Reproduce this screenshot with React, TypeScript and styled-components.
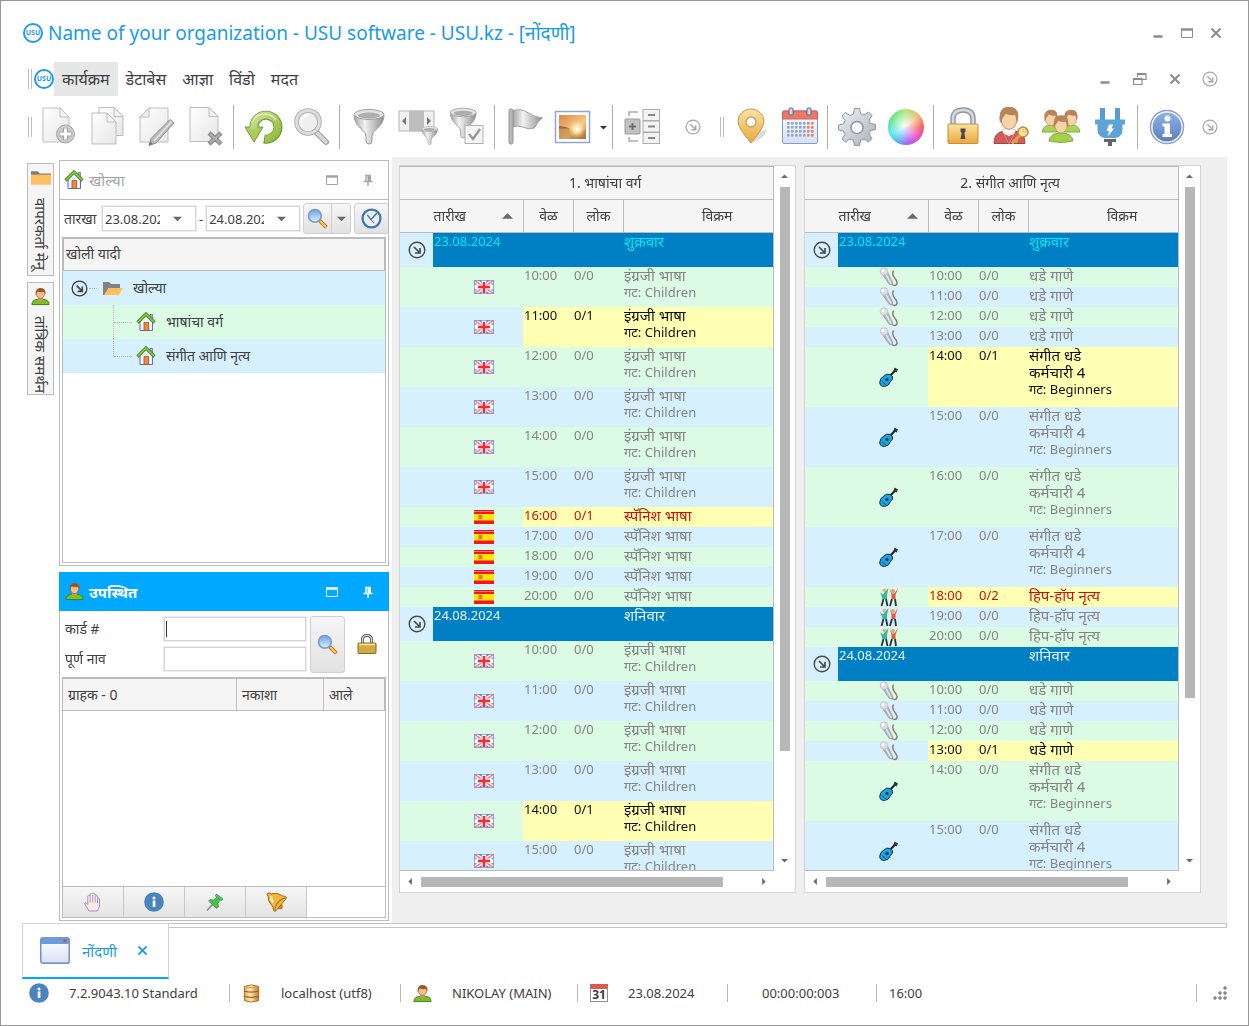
import React from "react";
import styled, { createGlobalStyle, css } from "styled-components";

const UI_FONT = '"Noto Sans", "Open Sans", "Noto Sans Devanagari", sans-serif';

const color = {
  accent: "#00a8ff",
  title: "#1a9be8",
  line: "#bcbcbc",
  lineSoft: "#d4d4d4",
  head: "#f5f5f5",
  text: "#404040",
  blueRow: "#d7f0fe",
  greenRow: "#dcfbe4",
  hot: "#ffffb4",
  day: "#0080c4",
  thumb: "#b7b7b7",
};

const GlobalStyle = createGlobalStyle`
  *, *::before, *::after { box-sizing: border-box; }
  body {
    margin: 0;
    font-family: ${UI_FONT};
    font-size: 13px;
    line-height: 16px;
    color: ${color.text};
    background: #fff;
  }
  button, input { font: inherit; color: inherit; }
  button { padding: 0; border: 0; background: none; cursor: pointer; }
  svg { display: block; flex: none; }
`;

/* ---------- shell ---------- */

const Window = styled.div`
  display: flex;
  flex-direction: column;
  height: 100vh;
  border: 1px solid #979797;
  padding: 0 21px;
  overflow: hidden;
`;

const TitleBar = styled.header`
  display: flex;
  align-items: center;
  gap: 5px;
  height: 64px;
  flex: none;
  padding: 0 5px 0 1px;
`;

const Title = styled.h1`
  flex: 1;
  margin: 0;
  font-size: 19px;
  line-height: 24px;
  font-weight: 400;
  color: ${color.title};
  white-space: nowrap;
`;

const WindowButtons = styled.div<{ $gap: number; $end?: number }>`
  display: flex;
  align-items: center;
  gap: ${(p) => p.$gap}px;
  margin-right: ${(p) => p.$end ?? 0}px;
  color: #8c8c8c;
`;

const MenuBar = styled.nav`
  display: flex;
  align-items: center;
  height: 34px;
  flex: none;
  margin-top: -3px;
  padding-left: 6px;
`;

const Grip = styled.span`
  width: 4px;
  height: 20px;
  margin-right: 2px;
  flex: none;
  border: solid #bdbdbd;
  border-width: 0 1px;
`;

const MenuItem = styled.button<{ $active?: boolean }>`
  height: 34px;
  padding: 0 8px;
  font-size: 16px;
  line-height: 20px;
  background: ${(p) => (p.$active ? "#e6e8e8" : "transparent")};
`;

const Spacer = styled.span`
  flex: 1;
`;

const ToolBar = styled.div`
  display: flex;
  align-items: center;
  height: 61px;
  flex: none;
  padding: 1px 0 0 6px;
`;

const ToolButton = styled.button`
  display: flex;
  align-items: center;
  justify-content: center;
  width: 49px;
  height: 48px;
  flex: none;
`;

const DropArrowButton = styled.button`
  display: grid;
  place-items: center;
  width: 12px;
  height: 40px;
`;

const MoreButton = styled.button<{ $wide?: boolean }>`
  display: grid;
  place-items: center;
  width: ${(p) => (p.$wide ? 54 : 34)}px;
  height: 40px;
  color: #a9a9a9;
`;

const ToolSeparator = styled.span`
  width: 1px;
  height: 44px;
  margin: 0 4px 0 3px;
  flex: none;
  background: #b0b0b0;
`;

const Workspace = styled.main`
  display: grid;
  grid-template-columns: 31px 330px minmax(0, 1fr);
  column-gap: 3px;
  flex: 1;
  min-height: 0;
  padding-left: 3px;
`;

/* ---------- side tabs ---------- */

const SideTabs = styled.div`
  display: flex;
  flex-direction: column;
  align-items: center;
  gap: 6px;
  padding-top: 6px;
`;

const SideTab = styled.button`
  display: flex;
  flex-direction: column;
  align-items: center;
  gap: 10px;
  width: 27px;
  height: 113px;
  padding-top: 4px;
  border: 1px solid ${color.line};
  background: ${color.head};
  white-space: nowrap;
  overflow: hidden;
`;

const VerticalText = styled.span`
  writing-mode: vertical-rl;
  font-size: 15px;
  line-height: 20px;
`;

/* ---------- dock panels ---------- */

const Dock = styled.div`
  display: flex;
  flex-direction: column;
  gap: 6px;
  padding: 3px 0 2px;
  min-height: 0;
`;

const Panel = styled.section<{ $grow: number }>`
  display: flex;
  flex-direction: column;
  flex: ${(p) => p.$grow} 1 0;
  min-height: 0;
  border: 1px solid ${color.line};
  background: #fff;
`;

const PanelHeader = styled.header<{ $active?: boolean }>`
  display: flex;
  align-items: center;
  gap: 5px;
  height: 39px;
  flex: none;
  padding: 0 12px 0 4px;
  color: #a4a4a4;
  border-bottom: 1px solid ${color.line};
  ${(p) =>
    p.$active &&
    css`
      margin: -1px -1px 0;
      padding: 0 13px 0 6px;
      color: #fff;
      background: ${color.accent};
      border-bottom: 0;
    `}
`;

const PanelTitle = styled.h2<{ $strong?: boolean }>`
  flex: 1;
  margin: 0;
  font-size: 15px;
  line-height: 20px;
  font-weight: ${(p) => (p.$strong ? 700 : 400)};
`;

const PanelAction = styled.button`
  display: grid;
  place-items: center;
  width: 16px;
  height: 20px;
  margin-left: 15px;
`;

const FilterRow = styled.div`
  display: flex;
  align-items: center;
  gap: 3px;
  height: 37px;
  flex: none;
  padding-left: 4px;
  overflow: hidden;
  white-space: nowrap;
  & > * {
    flex: none;
  }
`;

const FilterLabel = styled.label`
  width: 35px;
  font-size: 14px;
  line-height: 20px;
`;

const DateBox = styled.span`
  display: flex;
  align-items: center;
  width: 94px;
  height: 25px;
  border: 1px solid ${color.lineSoft};
  outline: 1px solid #eee;
`;

const DateInput = styled.input`
  width: 57px;
  height: 20px;
  padding: 0 0 0 2px;
  border: 0;
  outline: 0;
  background: transparent;
`;

const DateDrop = styled.button`
  display: grid;
  place-items: center;
  flex: 1;
  height: 23px;
`;

const raised = css`
  border: 1px solid #cfcfcf;
  border-radius: 3px;
  background: linear-gradient(#f6f6f6, #e2e2e2);
`;

const SplitButton = styled.span`
  ${raised}
  display: flex;
  height: 31px;
`;

const SplitPart = styled.button<{ $width: number }>`
  display: grid;
  place-items: center;
  width: ${(p) => p.$width}px;
  & + & {
    border-left: 1px solid #cfcfcf;
  }
`;

const RaisedButton = styled.button<{ $tall?: boolean }>`
  ${raised}
  display: grid;
  place-items: center;
  width: 35px;
  height: ${(p) => (p.$tall ? 57 : 31)}px;
  flex: none;
`;

const Inset = styled.div`
  display: flex;
  flex-direction: column;
  flex: 1;
  min-height: 0;
  margin: 0 2px 2px;
  border: 1px solid ${color.line};
`;

const TreeHead = styled.div`
  height: 33px;
  flex: none;
  padding: 5px 2px;
  font-size: 14px;
  line-height: 20px;
  background: ${color.head};
  border: 1px solid ${color.line};
`;

const Tree = styled.ul`
  list-style: none;
  margin: 0;
  padding: 0;
`;

const TreeRow = styled.li<{ $tone: "blue" | "green" }>`
  display: flex;
  align-items: center;
  height: 34px;
  font-size: 14px;
  line-height: 20px;
  background: ${(p) => (p.$tone === "blue" ? color.blueRow : color.greenRow)};
`;

const TreeToggle = styled.button`
  display: grid;
  place-items: center;
  width: 20px;
  height: 20px;
  margin-left: 6px;
`;

const TreeDash = styled.span`
  width: 8px;
  margin-right: 6px;
  border-top: 1px dotted #b4b4b4;
`;

const TreeBranch = styled.span<{ $last?: boolean }>`
  align-self: ${(p) => (p.$last ? "flex-start" : "stretch")};
  width: 1px;
  height: ${(p) => (p.$last ? "17px" : "auto")};
  margin-left: 50px;
  border-left: 1px dotted #b4b4b4;
`;

const TreeTwig = styled.span`
  width: 18px;
  margin-right: 4px;
  border-top: 1px dotted #b4b4b4;
`;

const TreeLabel = styled.span`
  margin-left: 10px;
`;

/* ---------- attendance panel ---------- */

const LookupForm = styled.form`
  display: grid;
  grid-template-columns: 95px 142px 35px 1fr;
  grid-template-rows: 24px 24px;
  gap: 6px 4px;
  flex: none;
  padding: 6px 4px 6px 5px;
  align-items: center;
`;

const FieldLabel = styled.label`
  font-size: 14px;
  line-height: 20px;
`;

const TextField = styled.input<{ $caret?: boolean }>`
  width: 100%;
  height: 24px;
  padding: 0 2px;
  border: 1px solid ${color.lineSoft};
  outline: 1px solid #eee;
  ${(p) =>
    p.$caret &&
    css`
      caret-color: transparent;
      background: linear-gradient(#333, #333) no-repeat 1px center / 1px 16px;
    `}
`;

const SpanRows = styled.div`
  grid-row: 1 / span 2;
  grid-column: 3;
`;

const LockCell = styled.div`
  grid-row: 1 / span 2;
  grid-column: 4;
  display: grid;
  place-items: center;
`;

const ClientTable = styled.table`
  width: 100%;
  border-spacing: 0;
  table-layout: fixed;
`;

const ClientTh = styled.th`
  height: 33px;
  padding: 0 5px;
  text-align: left;
  font-size: 14px;
  line-height: 20px;
  font-weight: 400;
  background: ${color.head};
  border: solid ${color.line};
  border-width: 1px 1px 1px 0;
`;

const ActionStrip = styled.div`
  display: flex;
  height: 31px;
  flex: none;
  margin-top: auto;
  border-top: 1px solid ${color.line};
`;

const StripButton = styled.button`
  display: grid;
  place-items: center;
  width: 61px;
  background: linear-gradient(#f6f6f6, #e4e4e4);
  border-right: 1px solid #c8c8c8;
`;

/* ---------- schedule grids ---------- */

const Mdi = styled.div`
  display: grid;
  grid-template-columns: repeat(2, minmax(0, 1fr));
  gap: 8px;
  padding: 8px 26px 30px 7px;
  background: #efefef;
  min-height: 0;
`;

const GridFrame = styled.section`
  display: grid;
  grid-template-columns: minmax(0, 1fr) 21px;
  grid-template-rows: minmax(0, 1fr) 21px;
  min-height: 0;
  border: 1px solid ${color.lineSoft};
  background: #fff;
`;

const Viewport = styled.div`
  overflow: hidden;
  border: solid ${color.line};
  border-width: 1px 1px 1px 0;
`;

const Schedule = styled.table`
  width: 110%;
  border-spacing: 0;
  table-layout: fixed;
`;

const Th = styled.th`
  height: 33px;
  padding: 0;
  font-size: 14px;
  line-height: 20px;
  font-weight: 400;
  background: ${color.head};
  border-bottom: 1px solid ${color.line};
  & + & {
    border-left: 1px solid ${color.line};
  }
`;

const SortHead = styled.button`
  display: flex;
  align-items: center;
  justify-content: flex-end;
  gap: 36px;
  width: 100%;
  padding-right: 10px;
`;

type Tone = "blue" | "green";
type Mood = "idle" | "booked" | "now";

const Row = styled.tr<{ $tone: Tone; $lines: number }>`
  height: ${(p) => p.$lines * 20}px;
  background: ${(p) => (p.$tone === "blue" ? color.blueRow : color.greenRow)};
`;

const moodColor: Record<Mood, string> = { idle: "#858585", booked: "#111", now: "#c8140c" };

const Td = styled.td<{ $mood: Mood }>`
  padding: 0 0 0 1px;
  vertical-align: top;
  white-space: nowrap;
  color: ${(p) => moodColor[p.$mood]};
  background: ${(p) => (p.$mood === "idle" ? "transparent" : color.hot)};
`;

const Line = styled.span<{ $large?: boolean }>`
  display: block;
  font-size: ${(p) => (p.$large ? 15 : 13)}px;
  line-height: 17px;
`;

const IconTd = styled.td`
  padding: 0 0 0 45px;
  vertical-align: middle;
  svg {
    margin: 0 auto;
  }
`;

const DayRow = styled.tr<{ $today?: boolean }>`
  height: 34px;
  color: ${(p) => (p.$today ? "#00e6f5" : "#e8f6ff")};
`;

const DayTd = styled.td`
  padding: 0 0 0 1px;
  vertical-align: top;
  background: ${color.day};
`;

const ToggleTd = styled.td`
  padding: 0;
  color: #4a4a4a;
  background: ${color.blueRow};
`;

const ToggleButton = styled.button`
  display: block;
  margin: 0 auto;
`;

const Scroll = styled.div<{ $dir: "column" | "row" }>`
  display: flex;
  flex-direction: ${(p) => p.$dir};
  align-items: center;
`;

const ScrollButton = styled.button`
  display: grid;
  place-items: center;
  width: 21px;
  height: 21px;
  flex: none;
`;

const ScrollTrack = styled.div<{ $dir: "column" | "row" }>`
  display: flex;
  flex-direction: ${(p) => p.$dir};
  flex: 1;
  min-height: 0;
`;

const ScrollThumb = styled.div<{ $dir: "column" | "row"; $size: number }>`
  width: ${(p) => (p.$dir === "row" ? `${p.$size}%` : "10px")};
  height: ${(p) => (p.$dir === "row" ? "10px" : `${p.$size}%`)};
  background: ${color.thumb};
`;

/* ---------- document tabs and status ---------- */

const DocTabs = styled.div`
  display: flex;
  height: 56px;
  flex: none;
`;

const DocTab = styled.div`
  display: flex;
  align-items: center;
  gap: 12px;
  width: 147px;
  padding: 0 20px 0 17px;
  color: ${color.title};
  border: solid ${color.lineSoft};
  border-width: 1px 1px 0;
  border-bottom: 2px solid ${color.accent};
`;

const DocTabName = styled.button`
  flex: 1;
  text-align: left;
  font-size: 15px;
  line-height: 20px;
`;

const DocRail = styled.div`
  flex: 1;
  height: 5px;
  border: 1px solid #c4c4c4;
  border-left: 0;
`;

const StatusBar = styled.footer`
  display: flex;
  align-items: center;
  height: 28px;
  flex: none;
  margin-bottom: 18px;
`;

const StatusCell = styled.div<{ $width: number; $pad?: number; $open?: boolean }>`
  display: flex;
  align-items: center;
  gap: 20px;
  width: ${(p) => p.$width}px;
  height: 18px;
  padding-left: ${(p) => p.$pad ?? 12}px;
  border-right: ${(p) => (p.$open ? 0 : 1)}px solid #b8b8b8;
  white-space: nowrap;
`;

const StatusGrip = styled.div`
  display: flex;
  align-items: center;
  justify-content: flex-end;
  width: 31px;
  height: 18px;
  margin-left: auto;
  border-left: 1px solid #b8b8b8;
`;

/* ---------- drawings ---------- */

const HiddenDefs = styled.svg`
  position: absolute;
  width: 0;
  height: 0;
`;

const Defs = () => (
  <HiddenDefs aria-hidden="true">
    <defs>
      <linearGradient id="paper" x1="0" y1="0" x2="1" y2="1">
        <stop offset="0" stopColor="#fff" />
        <stop offset="1" stopColor="#e6e6e6" />
      </linearGradient>
      <linearGradient id="steel" x1="0" y1="0" x2="1" y2="0">
        <stop offset="0" stopColor="#a2a2a2" />
        <stop offset=".35" stopColor="#f2f2f2" />
        <stop offset="1" stopColor="#8e8e8e" />
      </linearGradient>
      <linearGradient id="green" x1="0" y1="0" x2="1" y2="1">
        <stop offset="0" stopColor="#cfe08f" />
        <stop offset="1" stopColor="#8fbb3d" />
      </linearGradient>
      <linearGradient id="gold" x1="0" y1="0" x2="0" y2="1">
        <stop offset="0" stopColor="#fbe3a4" />
        <stop offset="1" stopColor="#e9a83c" />
      </linearGradient>
      <linearGradient id="drum" x1="0" y1="0" x2="1" y2="0">
        <stop offset="0" stopColor="#e9a34a" />
        <stop offset=".4" stopColor="#fff0c4" />
        <stop offset="1" stopColor="#c47a28" />
      </linearGradient>
      <linearGradient id="sunset" x1="0" y1="0" x2="1" y2="1">
        <stop offset="0" stopColor="#d98a4c" />
        <stop offset=".6" stopColor="#f8c681" />
        <stop offset="1" stopColor="#b9743c" />
      </linearGradient>
      <radialGradient id="glow">
        <stop offset="0" stopColor="#fffdf0" />
        <stop offset=".3" stopColor="#fff0b8" />
        <stop offset="1" stopColor="#fbd28c" stopOpacity="0" />
      </radialGradient>
      <linearGradient id="gear" x1="0" y1="0" x2="1" y2="1">
        <stop offset="0" stopColor="#f0f2f5" />
        <stop offset="1" stopColor="#a9afbb" />
      </linearGradient>
      <linearGradient id="blueDisc" x1="0" y1="0" x2="0" y2="1">
        <stop offset="0" stopColor="#8fb2e2" />
        <stop offset="1" stopColor="#5b7fc2" />
      </linearGradient>
      <linearGradient id="lens" x1="0" y1="0" x2="0" y2="1">
        <stop offset="0" stopColor="#6aa3ec" />
        <stop offset="1" stopColor="#dff1ff" />
      </linearGradient>
      <linearGradient id="sheet" x1="0" y1="0" x2="0" y2="1">
        <stop offset="0" stopColor="#fff" />
        <stop offset="1" stopColor="#d7e1f4" />
      </linearGradient>
    </defs>
  </HiddenDefs>
);

const Icon = ({ size = 40, box = 40, children }: { size?: number; box?: number; children: React.ReactNode }) => (
  <svg width={size} height={size} viewBox={`0 0 ${box} ${box}`} fill="none" aria-hidden="true">
    {children}
  </svg>
);

const Logo = styled.span`
  display: grid;
  place-items: center;
  width: 20px;
  height: 20px;
  flex: none;
  border: 2px solid #1e9af0;
  border-radius: 50%;
  font-size: 7px;
  line-height: 8px;
  font-weight: 700;
  color: #1e9af0;
  background: #fff;
`;

const Page = ({ x, y, w, h }: { x: number; y: number; w: number; h: number }) => (
  <>
    <path
      d={`M${x} ${y}h${w - 9}l9 9v${h - 9}h-${w}z`}
      fill="url(#paper)"
      stroke="#bdbdbd"
      strokeLinejoin="round"
    />
    <path d={`M${x + w - 9} ${y}v9h9z`} fill="#f4f4f4" stroke="#bdbdbd" strokeLinejoin="round" />
  </>
);

const NewIcon = () => (
  <Icon>
    <Page x={4} y={1} w={26} h={34} />
    <circle cx="26.500" cy="27" r="9" fill="#cacaca" stroke="#a8a8a8" />
    <path d="M26.500 21v12M20.500 27h12" stroke="#a0a0a0" strokeWidth="5" />
    <path d="M26.500 21.500v11M21 27h11" stroke="#fff" strokeWidth="3" />
  </Icon>
);
const CopyIcon = () => (
  <Icon>
    <Page x={11} y={0.5} w={24} h={28} />
    <Page x={4} y={6} w={24} h={31} />
  </Icon>
);
const EditIcon = () => (
  <Icon>
    <path d="M12 1h19v34H3V10z" fill="url(#paper)" stroke="#bdbdbd" strokeLinejoin="round" />
    <path d="M12 1v9H3z" fill="#eee" stroke="#bdbdbd" strokeLinejoin="round" />
    <path d="M33 12.500l4 3.500-18 20-7 2.500 2-7z" fill="#bababa" stroke="#8c8c8c" strokeLinejoin="round" />
    <path d="M34.500 14.500 17 34" stroke="#e9e9e9" strokeWidth="1.500" />
    <path d="m13.500 34.500 2.500 2.500-4 1.500z" fill="#777" />
  </Icon>
);
const DeleteIcon = () => (
  <Icon>
    <Page x={4} y={0.5} w={28} h={34} />
    <path d="m23 26 12 11M35 26 23 37" stroke="#909090" strokeWidth="4.500" />
    <path d="m24 27 10 9M34 27l-10 9" stroke="#acacac" strokeWidth="2" />
  </Icon>
);
const RefreshIcon = () => (
  <Icon>
    <path d="M11 21A12 12 0 1 1 21 32" stroke="#6f9a34" strokeWidth="9" />
    <path d="M2 20h18l-9 15z" fill="#a9cc5a" stroke="#6f9a34" strokeLinejoin="round" />
    <path d="M11 22A12 12 0 1 1 22 31.900" stroke="url(#green)" strokeWidth="7" />
    <path d="M9 15A14 14 0 0 1 33 13" stroke="#e2efb8" strokeWidth="1.500" />
  </Icon>
);
const ToolSearchIcon = () => (
  <Icon>
    <path d="m24 25 10 10" stroke="#a0a0a0" strokeWidth="6" strokeLinecap="round" />
    <path d="m25 26 9 9" stroke="#d8d8d8" strokeWidth="3.500" strokeLinecap="round" />
    <circle cx="16" cy="15" r="11.500" fill="#efefef" stroke="#a8a8a8" strokeWidth="4.500" />
    <circle cx="16" cy="15" r="11.500" stroke="#dedede" strokeWidth="2.800" />
    <path d="M9 16a7 7 0 0 1 8-8" stroke="#fff" strokeWidth="2.500" />
  </Icon>
);
const FunnelShape = () => (
  <>
    <path d="M5 8q0 8 8 14.500 4 3 4 7V34q0 3 3 3t3-3v-4.500q0-4 4-7Q35 16 35 8z" fill="url(#steel)" stroke="#999" />
    <ellipse cx="20" cy="7.500" rx="15" ry="5" fill="#e2e2e2" stroke="#a2a2a2" />
    <ellipse cx="20" cy="8.500" rx="11" ry="3" fill="#adadad" />
  </>
);
const FunnelIcon = () => (
  <Icon>
    <FunnelShape />
  </Icon>
);
const ColumnFilterIcon = () => (
  <Icon>
    <rect x="1" y="4" width="35" height="20" fill="#f1f1f1" stroke="#b5b5b5" />
    <rect x="11" y="3.500" width="15" height="21" fill="#bdbdbd" />
    <path d="M8 10v8l-4-4zM29 10v8l4-4z" fill="#777" />
    <g transform="translate(21 18) scale(.53)">
      <FunnelShape />
    </g>
  </Icon>
);
const FilterCheckIcon = () => (
  <Icon>
    <g transform="translate(-1 -1) scale(.86)">
      <FunnelShape />
    </g>
    <rect x="18" y="18.500" width="18" height="18" fill="#f6f6f6" stroke="#b0b0b0" />
    <path d="m22 27 4 5 7-10" stroke="#9a9a9a" strokeWidth="2.500" />
  </Icon>
);
const FlagIcon = () => (
  <Icon>
    <path d="M8.500 4q8-3 14 1 7 5 16 6-5 3-8 10-6 2-12-1-5-2-10 0z" fill="url(#steel)" stroke="#a2a2a2" />
    <rect x="5" y="2" width="4" height="35" rx="1.500" fill="#b8b8b8" stroke="#949494" />
  </Icon>
);
const PictureIcon = () => (
  <Icon>
    <rect x="2.500" y="4.500" width="34" height="31" fill="#fff" stroke="#8fa6d4" strokeWidth="1.500" />
    <rect x="6" y="8" width="27" height="24" fill="url(#sunset)" />
    <path d="M6 20q8 0 14 3h13v9H6z" fill="#a2672f" opacity=".4" />
    <path d="M6 19q6 0 11 2.500H6z" fill="#5d4a3c" opacity=".6" />
    <circle cx="24" cy="22" r="9" fill="url(#glow)" />
  </Icon>
);
const GroupingIcon = () => (
  <Icon>
    <path d="M7 9V5h9M7 30v4h9" stroke="#aaa" strokeWidth="1.500" />
    <rect x="3" y="12" width="15" height="15" rx="1" fill="#c2c2c2" stroke="#999" />
    <path d="M10.500 16v7M7 19.500h7" stroke="#707070" strokeWidth="2" />
    {[2.5, 14, 25.5].map((y) => (
      <React.Fragment key={y}>
        <rect x="21" y={y} width="16.500" height="11" fill="#f3f3f3" stroke="#adadad" />
        <path d={`M26 ${y + 5.5}h7`} stroke="#888" strokeWidth="2" />
      </React.Fragment>
    ))}
  </Icon>
);
const PinMapIcon = () => (
  <Icon>
    <path d="M21 36q4-13 15-13-2 8-12 11z" fill="#999" opacity=".35" />
    <path d="M20 36Q7 21 7 14.500a13 12.500 0 0 1 26 0Q33 21 20 36z" fill="url(#gold)" stroke="#c99a4e" />
    <circle cx="20" cy="15" r="5" fill="#fff" stroke="#c9a468" strokeWidth="1.500" />
  </Icon>
);
const CalendarIcon = () => (
  <Icon>
    <rect x="2.500" y="4" width="35" height="32.500" rx="1.500" fill="url(#sheet)" stroke="#7f9bd0" />
    <path d="M2.500 5.500q0-1.500 1.500-1.500h32q1.500 0 1.500 1.500V12h-35z" fill="#e8786a" stroke="#d2604f" />
    <rect x="9" y="1" width="4" height="7" rx="1" fill="#cfd5e0" stroke="#5b6a88" />
    <rect x="27" y="1" width="4" height="7" rx="1" fill="#cfd5e0" stroke="#5b6a88" />
    {[15, 19, 23, 27].map((y) =>
      [7, 11, 15, 19, 23, 27, 31].map((x) => (
        <rect key={`${x}-${y}`} x={x} y={y} width="2.600" height="2.600" fill={x > 26 ? "#e08274" : "#8fa5d2"} />
      ))
    )}
  </Icon>
);
const GearIcon = () => (
  <Icon>
    <path
      d="M17.500 1.500h5l1 5 3.500 1.500 4.500-3 3.500 3.500-3 4.500 1.500 3.500 5 1v5l-5 1-1.500 3.500 3 4.500-3.500 3.500-4.500-3-3.500 1.500-1 5h-5l-1-5-3.500-1.500-4.500 3L5 32l3-4.500L6.500 24l-5-1v-5l5-1L8 13.500 5 9l3.500-3.500 4.500 3 3.500-1.500z"
      fill="url(#gear)"
      stroke="#8d94a2"
      strokeLinejoin="round"
    />
    <circle cx="20" cy="20.500" r="6" fill="#fff" stroke="#8d94a2" strokeWidth="1.500" />
  </Icon>
);

const ColorDisc = styled.span`
  width: 36px;
  height: 36px;
  border-radius: 50%;
  background: radial-gradient(circle at 45% 45%, #ffffffee 0, #ffffff00 65%),
    conic-gradient(#a8e060, #f2b070 50deg, #f06060 90deg, #f050c0 125deg, #b060f0 170deg, #50b0ff 210deg, #40e8e8 245deg, #38e080 290deg, #60e060 330deg, #a8e060);
`;

const PadlockIcon = () => (
  <Icon>
    <path d="M10 19v-7q0-9 10-9t10 9v7" stroke="#8d98a8" strokeWidth="5.500" />
    <path d="M10 19v-7q0-9 10-9t10 9v7" stroke="#d5dbe3" strokeWidth="2.500" />
    <rect x="5" y="17" width="30" height="19.500" rx="1" fill="url(#gold)" stroke="#c48f35" />
    <path d="M17.500 21.500h5v3l-1.200 1.500 1.200 6h-5l1.200-6-1.200-1.500z" fill="#4c4a48" />
  </Icon>
);
const Head = ({ x, y, s = 1 }: { x: number; y: number; s?: number }) => (
  <g transform={`translate(${x} ${y}) scale(${s})`}>
    <ellipse cx="0" cy="1" rx="6.500" ry="8" fill="#f7d3a8" stroke="#c08a58" strokeWidth=".8" />
    <path d="M-7.500 4q-2-12 5-13.500 7-1.500 9.500 3.500 1.500 4 0 9-1.500-3-1.500-6-5 1-8-1-3 3-5 8z" fill="#b98558" />
  </g>
);
const AdminIcon = () => (
  <Icon>
    <path d="M2 36.500q0-10 8-12l7-2 8 2q8 2 8 12z" fill="#cf5b5b" stroke="#a84040" />
    <path d="m10 23 7 13.500L24 23l-4-2h-6z" fill="#f6f6f6" stroke="#bbb" strokeWidth=".6" />
    <path d="m12 27 5 9.500 5-9.500-5 2z" fill="#cf5b5b" />
    <Head x={17} y={11.5} s={1.2} />
    <circle cx="31" cy="25" r="5" fill="#fbe09a" stroke="#c08a30" strokeWidth="1.500" />
    <circle cx="32.500" cy="23.500" r="1.500" fill="#fff" stroke="#c08a30" strokeWidth=".7" />
    <path d="m28 28-8 8.500m3-3.500 2.500 2" stroke="#d9a544" strokeWidth="3" />
  </Icon>
);
const UsersIcon = () => (
  <Icon>
    <path d="M1 25q1-7 9-7t10 7zM20 25q2-7 10-7t9 7z" fill="#a9d455" stroke="#7fae3c" />
    <Head x={10} y={11} s={0.85} />
    <Head x={30} y={11} s={0.85} />
    <path d="M8 34q1-8 12-8t12 8q-12 3-24 0z" fill="#a3d04c" stroke="#7fae3c" />
    <Head x={20} y={17.5} s={0.95} />
  </Icon>
);
const PlugIcon = () => (
  <Icon>
    <path d="M12.500 1v15M27.500 1v15" stroke="#5a9bd0" strokeWidth="5" />
    <path d="M5 12.500h30v5h-2.500V23q0 6-6.500 8H14q-6.500-2-6.500-8v-5.500H5z" fill="#5fa3d6" />
    <path d="M19 17.500h4l-1.500 4h2.500l-6 8 1-5.500h-2.500z" fill="#fff" />
    <path d="M14 32h12v3h-4v4h-4v-4h-4z" fill="#5e666e" />
  </Icon>
);
const InfoLargeIcon = () => (
  <Icon>
    <circle cx="20" cy="20" r="16.500" fill="#fff" stroke="#8aa0c8" strokeWidth="1.500" />
    <circle cx="20" cy="20" r="14.500" fill="url(#blueDisc)" />
    <circle cx="20.500" cy="11.500" r="3" fill="#fff" />
    <path d="M15.500 16.500h7.500V27h2v3H15.500v-3h2v-7.500h-2z" fill="#fff" />
  </Icon>
);

const CircleArrowIcon = ({ size = 16 }: { size?: number }) => (
  <Icon size={size} box={18}>
    <circle cx="9" cy="9" r="7.800" stroke="currentColor" strokeWidth="1.400" />
    <path d="m6 6 5.500 5.500M12 7v5H7" stroke="currentColor" strokeWidth="1.700" />
  </Icon>
);
const MinimizeIcon = () => (
  <Icon size={12} box={12}>
    <path d="M1.500 9.500h9" stroke="currentColor" strokeWidth="2.500" />
  </Icon>
);
const MaximizeIcon = () => (
  <Icon size={12} box={12}>
    <path d="M.5 2v8.500h11V2" stroke="currentColor" />
    <path d="M0 2.500h12" stroke="currentColor" strokeWidth="2.500" />
  </Icon>
);
const RestoreIcon = () => (
  <Icon size={14} box={14}>
    <path d="M4.500 5V1.500h8.500v6h-4M.5 6.500h8.500v6H.5z" stroke="currentColor" strokeWidth="1.200" />
    <path d="M4.500 2H13M.5 7H9" stroke="currentColor" strokeWidth="2" />
  </Icon>
);
const CloseIcon = ({ size = 12 }: { size?: number }) => (
  <Icon size={size} box={12}>
    <path d="m1.500 1.500 9 9M10.500 1.500l-9 9" stroke="currentColor" strokeWidth="2" />
  </Icon>
);
const PushPinIcon = () => (
  <Icon size={12} box={12}>
    <path d="M3 1.500h6M4 1v6M1.500 7.500h9M6 7v5" stroke="currentColor" strokeWidth="1.400" />
    <path d="M5.500 1h3.500v6H5.500z" fill="currentColor" />
  </Icon>
);
const Caret = ({ dir, size = 9, fill = "#6a6a6a" }: { dir: "up" | "down" | "left" | "right"; size?: number; fill?: string }) => {
  const d = { up: "M0 7h10L5 2z", down: "M0 3h10L5 8z", left: "M7 0v10L2 5z", right: "M3 0v10l5-5z" }[dir];
  return (
    <Icon size={size} box={10}>
      <path d={d} fill={fill} />
    </Icon>
  );
};

const HouseIcon = () => (
  <Icon size={20} box={20}>
    <path d="M14 2.500h2.500V7H14z" fill="#9fb0dc" stroke="#5566a0" strokeWidth=".7" />
    <path d="M4 9v9.500h12.500V9L10 3z" fill="#eef0fb" stroke="#5f6fb0" />
    <path d="M1.500 10.500 10 2l8.500 8.500" stroke="#3f8a1c" strokeWidth="3.200" />
    <path d="M2 10 10 2l8 8" stroke="#8cd048" strokeWidth="1.500" />
    <path d="M8 10.500h4.500v8H8z" fill="#e8893c" stroke="#a9521d" strokeWidth=".8" />
  </Icon>
);
const FolderIcon = () => (
  <Icon size={20} box={18}>
    <path d="M0 3h6l2 2h10v4H0z" fill="#7d7d7d" />
    <path d="M0 6h18v9H0z" fill="#fdbf5f" />
  </Icon>
);
const FolderOpenIcon = () => (
  <Icon size={20} box={20}>
    <path d="M0 4h6l2 2h9v4H0zM0 8h5v9H0z" fill="#828282" />
    <path d="M5.500 10H20l-4 7H1z" fill="#fdbf5f" />
  </Icon>
);
const PersonIcon = () => (
  <Icon size={19} box={20}>
    <path d="M1 18.500q0-5 6-5.500h6q6 .5 6 5.500z" fill="#7cbf28" stroke="#467a12" />
    <path d="M7.500 9.500h5V14q-2.500 1.500-5 0z" fill="#d9955c" />
    <ellipse cx="10" cy="7" rx="4.300" ry="5.200" fill="#f0c08c" stroke="#9a5a2a" strokeWidth=".7" />
    <path d="M4.800 9Q4 1 10 1t5.300 7l-1.500-3Q10 6 7 4.500z" fill="#9b5523" />
  </Icon>
);
const SearchIcon = () => (
  <Icon size={21} box={20}>
    <path d="m12 12 6.500 6.500" stroke="#b9771f" strokeWidth="3.600" />
    <path d="m12.500 12.500 5.500 5.500" stroke="#fcc45a" strokeWidth="2" />
    <circle cx="7.500" cy="7.500" r="6" fill="url(#lens)" stroke="#7f9cc9" strokeWidth="1.600" />
  </Icon>
);
const ClockIcon = () => (
  <Icon size={21} box={20}>
    <circle cx="10" cy="10" r="8.500" fill="#fff" stroke="#3f74b5" strokeWidth="2.200" />
    <circle cx="10" cy="10" r="7" fill="#e3effb" />
    <path d="M6 6.500 9.500 11 15 5" stroke="#3c6aa5" strokeWidth="1.300" />
    <path d="m9.500 11 3 3.500" stroke="#e05a4a" />
  </Icon>
);
const SmallLockIcon = () => (
  <Icon size={20} box={20}>
    <path d="M5.500 10V5.500Q5.500 1.500 10 1.500t4.500 4V10" stroke="#606060" strokeWidth="3" />
    <path d="M5.500 10V5.500Q5.500 1.500 10 1.500t4.500 4V10" stroke="#dcdcdc" strokeWidth="1.200" />
    <rect x="1" y="9" width="18" height="10.500" rx="1" fill="#cfab42" stroke="#8a6a18" />
    <path d="M2 10.500h16" stroke="#f8e9a8" strokeWidth="1.500" />
  </Icon>
);
const HandIcon = () => (
  <Icon size={20} box={20}>
    <path
      d="M6 19 2 12.500q-.8-1.800.8-2l2 2V4.500q.2-1.500 1.600-1.200L7 4V2.500q.4-1.500 2-1L9.500 2q.8-1.800 2.300-.5l.4 1.500q1.600-.6 2.100.8l.2 2.200q1.600-.3 2 1V14l-2 5z"
      fill="#fdebe6"
      stroke="#a58fc0"
    />
    <path d="M7.200 4v6.500M9.700 3v7.500M12.200 3.500v7M14.500 6v5" stroke="#a58fc0" strokeWidth=".9" />
  </Icon>
);
const InfoIcon = () => (
  <Icon size={20} box={20}>
    <circle cx="10" cy="10" r="9.800" fill="#4a84be" />
    <circle cx="10" cy="6" r="1.500" fill="#fff" />
    <path d="M8.700 8.500h2.700v6.500H8.700z" fill="#fff" />
  </Icon>
);
const GreenPinIcon = () => (
  <Icon size={20} box={20}>
    <path d="m8 12-6 6.500" stroke="#888" strokeWidth="1.500" />
    <path d="m11.500 2 6.500 5-1.500 1.500-1.500-.5-2 3.500.5 3.500-2 1.500L3.500 9 5 7.500l3.500.5 3-2.500-1-2z" fill="#4fbb58" stroke="#2c8a35" strokeWidth=".6" />
  </Icon>
);
const BellIcon = () => (
  <Icon size={21} box={20}>
    <circle cx="13.500" cy="14" r="2.200" fill="#c98a24" stroke="#8a5a12" strokeWidth=".6" />
    <path
      d="M1 2.500Q1 .6 3 1l2 .8q5-1.500 8.500.7 2 1.500 5 1.700 1.500.8.500 2.300L9.500 17.800q-1.500 1.200-2.300-.3Q7 14 5 12 1.500 8.500 2.200 4.500z"
      fill="#f3b63e"
      stroke="#9a6210"
      strokeWidth=".9"
    />
    <path d="M18.500 5.800Q15 6 11.500 10T8.500 17.500" stroke="#b87a1c" strokeWidth="1.200" />
    <path d="M5 4q-.5 3 2 6" stroke="#fff0b8" strokeWidth="2.200" />
  </Icon>
);
const DatabaseIcon = () => (
  <Icon size={19} box={20}>
    <path d="M2.500 2.500q7.500-3 15 0v15q-7.500 3-15 0z" fill="url(#drum)" stroke="#b06c24" />
    <path d="M2.500 7.500q7.500 2 15 0M2.500 13q7.500 2 15 0" stroke="#a8641f" strokeWidth="1.300" />
    <path d="M3 3q7 2 14 0" stroke="#d9933f" />
  </Icon>
);
const WindowIcon = () => (
  <svg width="30" height="27" viewBox="0 0 30 27" fill="none" aria-hidden="true">
    <rect x=".8" y=".8" width="28.400" height="25.400" rx="2" fill="url(#sheet)" stroke="#5576b4" strokeWidth="1.200" />
    <path d="M1 2.500Q1 1 2.500 1h25Q29 1 29 2.500V7H1z" fill="#6b9ddb" />
    <rect x="23.500" y="2.500" width="3" height="2.500" fill="#d8493a" />
  </svg>
);
const DayBadge = styled.span`
  display: flex;
  align-items: center;
  justify-content: center;
  width: 18px;
  height: 18px;
  border: 1px solid #7c93bb;
  border-top: 5px solid #e05a4c;
  font-size: 12px;
  line-height: 12px;
  font-weight: 700;
  background: #fff;
`;
const ResizeIcon = () => (
  <Icon size={14} box={14}>
    {[[10, 0], [10, 5], [5, 5], [10, 10], [5, 10], [0, 10]].map(([x, y]) => (
      <path key={`${x}-${y}`} d={`M${x} ${y + 2}h4M${x + 2} ${y}v4`} stroke="#606060" />
    ))}
  </Icon>
);

const UkFlag = () => (
  <svg width="20" height="14" viewBox="0 0 20 14" aria-hidden="true">
    <rect width="20" height="14" fill="#6f80cc" />
    <path d="m0 0 20 14M20 0 0 14" stroke="#fff" strokeWidth="4" />
    <path d="m0 0 20 14M20 0 0 14" stroke="#f57a80" strokeWidth="1.500" />
    <path d="M10 0v14M0 7h20" stroke="#fff" strokeWidth="4.500" />
    <path d="M10 2v11M4 7h12" stroke="#f8262e" strokeWidth="2.600" />
    <path d="M.5.500h19v13H.5z" stroke="#7a8ad2" strokeOpacity=".7" fill="none" />
  </svg>
);
const SpainFlag = () => (
  <svg width="20" height="14" viewBox="0 0 20 14" aria-hidden="true">
    <rect width="20" height="14" fill="#f8141c" />
    <path d="M0 1.500h20" stroke="#ff7a7a" />
    <rect y="4" width="20" height="6.500" fill="#ffe600" />
    <rect x="4.500" y="5" width="4" height="4" fill="#e5782c" />
  </svg>
);
const MicIcon = () => (
  <Icon size={20} box={20}>
    <path d="M13 17.500q3 2 4.500 0 1.500-2.500-1.500-6-3.500-4-1.500-8" stroke="#8d7b72" strokeWidth="1.500" />
    <path d="M3.500 7.500 8.500 5l5.500 11-1.500 2-2.500-1z" fill="#b6b6c2" stroke="#878795" strokeWidth=".6" />
    <path d="m7 7.500 5 9" stroke="#e8e8ee" strokeWidth="1.500" />
    <circle cx="5" cy="4.500" r="3.800" fill="#dddde2" stroke="#bcbcc6" strokeWidth=".7" />
    <circle cx="4" cy="3.500" r="1.500" fill="#fff" />
  </Icon>
);
const GuitarIcon = () => (
  <Icon size={20} box={20}>
    <path d="m10 10 7-7.500" stroke="#222" strokeWidth="2" />
    <path d="m15.500.5 3.500 2-1.500 3-3-1.500z" fill="#333" />
    <path d="M5 9q2.500-3 6-1.500 3.500 1.500 2.500 4.500l-2 2.500Q10 19 5.500 19.500.5 19.500.8 15q.2-4 4.200-6z" fill="#1aa6e4" stroke="#14303f" />
    <circle cx="8" cy="12.500" r="1.700" fill="#0b3b58" />
    <path d="m3.500 15 3 2.500" stroke="#0b3b58" />
  </Icon>
);
const DanceIcon = () => (
  <Icon size={20} box={20}>
    <circle cx="5.500" cy="3.500" r="2" fill="#e8b48c" />
    <circle cx="14" cy="4" r="2" fill="#e8a078" />
    <path d="M1 4q1 3 3 3.500L9.500 1 8 8v4H3.500z" fill="#3fb59a" />
    <path d="M10.500 1 13 6.500h2.500L19 1l-2.500 7v4h-4V8z" fill="#e8583e" />
    <path d="M4.500 12 2.500 19M7 12l1.500 7M13 12l-2 7M16 12l1 7" stroke="#24343f" strokeWidth="1.800" />
  </Icon>
);

/* ---------- data ---------- */

type Slot = { time: string; people: string; text: string; icon: React.FC; mood?: Mood };
type Day = { date: string; weekday: string; today?: boolean; slots: Slot[] };

const range = (from: number, to: number) => Array.from({ length: to - from + 1 }, (_, i) => from + i);

const slots = (
  from: number,
  to: number,
  text: string,
  icon: React.FC,
  marks: Record<number, [string, Mood]> = {}
): Slot[] =>
  range(from, to).map((h) => ({
    time: `${h}:00`,
    people: marks[h]?.[0] ?? "0/0",
    mood: marks[h]?.[1],
    text,
    icon,
  }));

const ENGLISH = "इंग्रजी भाषा\nगट: Children";
const SPANISH = "स्पॅनिश भाषा";
const SINGING = "धडे गाणे";
const MUSIC = "संगीत धडे\nकर्मचारी 4\nगट: Beginners";
const HIPHOP = "हिप-हॉप नृत्य";

const rooms: { title: string; thumb: number; days: Day[] }[] = [
  {
    title: "1. भाषांचा वर्ग",
    thumb: 85,
    days: [
      {
        date: "23.08.2024",
        weekday: "शुक्रवार",
        today: true,
        slots: [
          ...slots(10, 15, ENGLISH, UkFlag, { 11: ["0/1", "booked"] }),
          ...slots(16, 20, SPANISH, SpainFlag, { 16: ["0/1", "now"] }),
        ],
      },
      {
        date: "24.08.2024",
        weekday: "शनिवार",
        slots: slots(10, 15, ENGLISH, UkFlag, { 14: ["0/1", "booked"] }),
      },
    ],
  },
  {
    title: "2. संगीत आणि नृत्य",
    thumb: 77,
    days: [
      {
        date: "23.08.2024",
        weekday: "शुक्रवार",
        today: true,
        slots: [
          ...slots(10, 13, SINGING, MicIcon),
          ...slots(14, 17, MUSIC, GuitarIcon, { 14: ["0/1", "booked"] }),
          ...slots(18, 20, HIPHOP, DanceIcon, { 18: ["0/2", "now"] }),
        ],
      },
      {
        date: "24.08.2024",
        weekday: "शनिवार",
        slots: [
          ...slots(10, 13, SINGING, MicIcon, { 13: ["0/1", "booked"] }),
          ...slots(14, 15, MUSIC, GuitarIcon),
        ],
      },
    ],
  },
];

type ToolGroup = { label: string; icon: React.FC; drop?: boolean }[];

const toolGroups: ToolGroup[] = [
  [
    { label: "New", icon: NewIcon },
    { label: "Copy", icon: CopyIcon },
    { label: "Edit", icon: EditIcon },
    { label: "Delete", icon: DeleteIcon },
  ],
  [
    { label: "Refresh", icon: RefreshIcon },
    { label: "Search", icon: ToolSearchIcon },
  ],
  [
    { label: "Filter", icon: FunnelIcon },
    { label: "Filter columns", icon: ColumnFilterIcon },
    { label: "Filter selection", icon: FilterCheckIcon },
  ],
  [
    { label: "Flag", icon: FlagIcon },
    { label: "Picture", icon: PictureIcon, drop: true },
  ],
  [{ label: "Grouping", icon: GroupingIcon }],
];

const systemGroups: ToolGroup[] = [
  [
    { label: "Map", icon: PinMapIcon },
    { label: "Calendar", icon: CalendarIcon },
  ],
  [
    { label: "Settings", icon: GearIcon },
    { label: "Colours", icon: () => <ColorDisc /> },
  ],
  [
    { label: "Lock", icon: PadlockIcon },
    { label: "Permissions", icon: AdminIcon },
    { label: "Users", icon: UsersIcon },
    { label: "Connection", icon: PlugIcon },
  ],
  [{ label: "Information", icon: InfoLargeIcon }],
];

/* ---------- views ---------- */

const ToolGroups = ({ groups }: { groups: ToolGroup[] }) => (
  <>
    {groups.map((group, i) => (
      <React.Fragment key={i}>
        {i > 0 && <ToolSeparator />}
        {group.map(({ label, icon: Glyph, drop }) => (
          <React.Fragment key={label}>
            <ToolButton aria-label={label}>
              <Glyph />
            </ToolButton>
            {drop && (
              <DropArrowButton aria-label={`${label} options`}>
                <Caret dir="down" size={7} fill="#333" />
              </DropArrowButton>
            )}
          </React.Fragment>
        ))}
      </React.Fragment>
    ))}
  </>
);

const RoomGrid = ({ title, thumb, days }: (typeof rooms)[number]) => (
  <GridFrame>
    <Viewport>
      <Schedule>
        <colgroup>
          <col width={33} />
          <col width={90} />
          <col width={50} />
          <col width={50} />
          <col />
        </colgroup>
        <thead>
          <tr>
            <Th colSpan={5}>{title}</Th>
          </tr>
          <tr>
            <Th colSpan={2}>
              <SortHead>
                तारीख
                <Caret dir="up" size={11} />
              </SortHead>
            </Th>
            <Th>वेळ</Th>
            <Th>लोक</Th>
            <Th>विक्रम</Th>
          </tr>
        </thead>
        {days.map((day) => (
          <tbody key={day.date}>
            <DayRow $today={day.today}>
              <ToggleTd>
                <ToggleButton aria-label="Collapse day">
                  <CircleArrowIcon size={18} />
                </ToggleButton>
              </ToggleTd>
              <DayTd colSpan={3}>
                <Line>{day.date}</Line>
              </DayTd>
              <DayTd>
                <Line $large>{day.weekday}</Line>
              </DayTd>
            </DayRow>
            {day.slots.map(({ time, people, text, icon: Glyph, mood = "idle" }, i) => {
              const lines = text.split("\n");
              return (
                <Row key={time} $tone={i % 2 ? "blue" : "green"} $lines={lines.length}>
                  <IconTd colSpan={2}>
                    <Glyph />
                  </IconTd>
                  <Td $mood={mood}>
                    <Line>{time}</Line>
                  </Td>
                  <Td $mood={mood}>
                    <Line>{people}</Line>
                  </Td>
                  <Td $mood={mood}>
                    {lines.map((line) => (
                      <Line key={line} $large={!/[A-Za-z]/.test(line)}>
                        {line}
                      </Line>
                    ))}
                  </Td>
                </Row>
              );
            })}
          </tbody>
        ))}
      </Schedule>
    </Viewport>
    <Scroll $dir="column">
      <ScrollButton aria-label="Scroll up">
        <Caret dir="up" size={7} />
      </ScrollButton>
      <ScrollTrack $dir="column">
        <ScrollThumb $dir="column" $size={thumb} />
      </ScrollTrack>
      <ScrollButton aria-label="Scroll down">
        <Caret dir="down" size={7} />
      </ScrollButton>
    </Scroll>
    <Scroll $dir="row">
      <ScrollButton aria-label="Scroll left">
        <Caret dir="left" size={7} />
      </ScrollButton>
      <ScrollTrack $dir="row">
        <ScrollThumb $dir="row" $size={91} />
      </ScrollTrack>
      <ScrollButton aria-label="Scroll right">
        <Caret dir="right" size={7} />
      </ScrollButton>
    </Scroll>
  </GridFrame>
);

const RoomsPanel = () => (
  <Panel $grow={407}>
    <PanelHeader>
      <HouseIcon />
      <PanelTitle>खोल्या</PanelTitle>
      <PanelAction aria-label="Maximize">
        <MaximizeIcon />
      </PanelAction>
      <PanelAction aria-label="Pin">
        <PushPinIcon />
      </PanelAction>
    </PanelHeader>
    <FilterRow>
      <FilterLabel htmlFor="from">तारखा</FilterLabel>
      <DateBox>
        <DateInput id="from" defaultValue="23.08.2024" />
        <DateDrop aria-label="Pick start date">
          <Caret dir="down" />
        </DateDrop>
      </DateBox>
      <span>-</span>
      <DateBox>
        <DateInput aria-label="End date" defaultValue="24.08.2024" />
        <DateDrop aria-label="Pick end date">
          <Caret dir="down" />
        </DateDrop>
      </DateBox>
      <SplitButton>
        <SplitPart $width={27} aria-label="Find">
          <SearchIcon />
        </SplitPart>
        <SplitPart $width={19} aria-label="Find options">
          <Caret dir="down" />
        </SplitPart>
      </SplitButton>
      <RaisedButton aria-label="Now">
        <ClockIcon />
      </RaisedButton>
    </FilterRow>
    <Inset>
      <TreeHead>खोली यादी</TreeHead>
      <Tree>
        <TreeRow $tone="blue">
          <TreeToggle aria-label="Collapse">
            <CircleArrowIcon size={17} />
          </TreeToggle>
          <TreeDash />
          <FolderOpenIcon />
          <TreeLabel>खोल्या</TreeLabel>
        </TreeRow>
        <TreeRow $tone="green">
          <TreeBranch />
          <TreeTwig />
          <HouseIcon />
          <TreeLabel>भाषांचा वर्ग</TreeLabel>
        </TreeRow>
        <TreeRow $tone="blue">
          <TreeBranch $last />
          <TreeTwig />
          <HouseIcon />
          <TreeLabel>संगीत आणि नृत्य</TreeLabel>
        </TreeRow>
      </Tree>
    </Inset>
  </Panel>
);

const AttendancePanel = () => (
  <Panel $grow={349}>
    <PanelHeader $active>
      <PersonIcon />
      <PanelTitle $strong>उपस्थित</PanelTitle>
      <PanelAction aria-label="Maximize">
        <MaximizeIcon />
      </PanelAction>
      <PanelAction aria-label="Pin">
        <PushPinIcon />
      </PanelAction>
    </PanelHeader>
    <LookupForm onSubmit={(e) => e.preventDefault()}>
      <FieldLabel htmlFor="card">कार्ड #</FieldLabel>
      <TextField id="card" $caret autoFocus />
      <FieldLabel htmlFor="fullname">पूर्ण नाव</FieldLabel>
      <TextField id="fullname" />
      <SpanRows>
        <RaisedButton $tall aria-label="Find client">
          <SearchIcon />
        </RaisedButton>
      </SpanRows>
      <LockCell>
        <SmallLockIcon />
      </LockCell>
    </LookupForm>
    <Inset>
      <ClientTable>
        <colgroup>
          <col width="54%" />
          <col width="27%" />
          <col />
        </colgroup>
        <thead>
          <tr>
            <ClientTh>ग्राहक - 0</ClientTh>
            <ClientTh>नकाशा</ClientTh>
            <ClientTh>आले</ClientTh>
          </tr>
        </thead>
      </ClientTable>
      <ActionStrip>
        <StripButton aria-label="Stop">
          <HandIcon />
        </StripButton>
        <StripButton aria-label="Details">
          <InfoIcon />
        </StripButton>
        <StripButton aria-label="Attach">
          <GreenPinIcon />
        </StripButton>
        <StripButton aria-label="Notify">
          <BellIcon />
        </StripButton>
      </ActionStrip>
    </Inset>
  </Panel>
);

export default function App() {
  return (
    <Window>
      <GlobalStyle />
      <Defs />
      <TitleBar>
        <Logo>USU</Logo>
        <Title>Name of your organization - USU software - USU.kz - [नोंदणी]</Title>
        <WindowButtons $gap={17}>
          <button aria-label="Minimize window">
            <MinimizeIcon />
          </button>
          <button aria-label="Maximize window">
            <MaximizeIcon />
          </button>
          <button aria-label="Close window">
            <CloseIcon />
          </button>
        </WindowButtons>
      </TitleBar>

      <MenuBar>
        <Grip />
        <Logo>USU</Logo>
        <MenuItem $active>कार्यक्रम</MenuItem>
        <MenuItem>डेटाबेस</MenuItem>
        <MenuItem>आज्ञा</MenuItem>
        <MenuItem>विंडो</MenuItem>
        <MenuItem>मदत</MenuItem>
        <Spacer />
        <WindowButtons $gap={22} $end={12}>
          <button aria-label="Minimize document">
            <MinimizeIcon />
          </button>
          <button aria-label="Restore document">
            <RestoreIcon />
          </button>
          <button aria-label="Close document">
            <CloseIcon />
          </button>
        </WindowButtons>
        <MoreButton aria-label="More menu items">
          <CircleArrowIcon />
        </MoreButton>
      </MenuBar>

      <ToolBar>
        <Grip />
        <ToolGroups groups={toolGroups} />
        <MoreButton $wide aria-label="More tools">
          <CircleArrowIcon />
        </MoreButton>
        <Grip />
        <ToolGroups groups={systemGroups} />
        <Spacer />
        <MoreButton aria-label="More system tools">
          <CircleArrowIcon />
        </MoreButton>
      </ToolBar>

      <Workspace>
        <SideTabs>
          <SideTab>
            <FolderIcon />
            <VerticalText>वापरकर्ता मेनू</VerticalText>
          </SideTab>
          <SideTab>
            <PersonIcon />
            <VerticalText>तांत्रिक समर्थन</VerticalText>
          </SideTab>
        </SideTabs>
        <Dock>
          <RoomsPanel />
          <AttendancePanel />
        </Dock>
        <Mdi>
          {rooms.map((room) => (
            <RoomGrid key={room.title} {...room} />
          ))}
        </Mdi>
      </Workspace>

      <DocTabs>
        <DocTab>
          <WindowIcon />
          <DocTabName>नोंदणी</DocTabName>
          <button aria-label="Close tab">
            <CloseIcon size={11} />
          </button>
        </DocTab>
        <DocRail />
      </DocTabs>

      <StatusBar>
        <StatusCell $width={208} $pad={7}>
          <InfoIcon />
          7.2.9043.10 Standard
        </StatusCell>
        <StatusCell $width={171}>
          <DatabaseIcon />
          localhost (utf8)
        </StatusCell>
        <StatusCell $width={177}>
          <PersonIcon />
          NIKOLAY (MAIN)
        </StatusCell>
        <StatusCell $width={150}>
          <DayBadge>31</DayBadge>
          23.08.2024
        </StatusCell>
        <StatusCell $width={149} $pad={34}>
          00:00:00:003
        </StatusCell>
        <StatusCell as="time" $width={60} $open>
          16:00
        </StatusCell>
        <StatusGrip>
          <ResizeIcon />
        </StatusGrip>
      </StatusBar>
    </Window>
  );
}
